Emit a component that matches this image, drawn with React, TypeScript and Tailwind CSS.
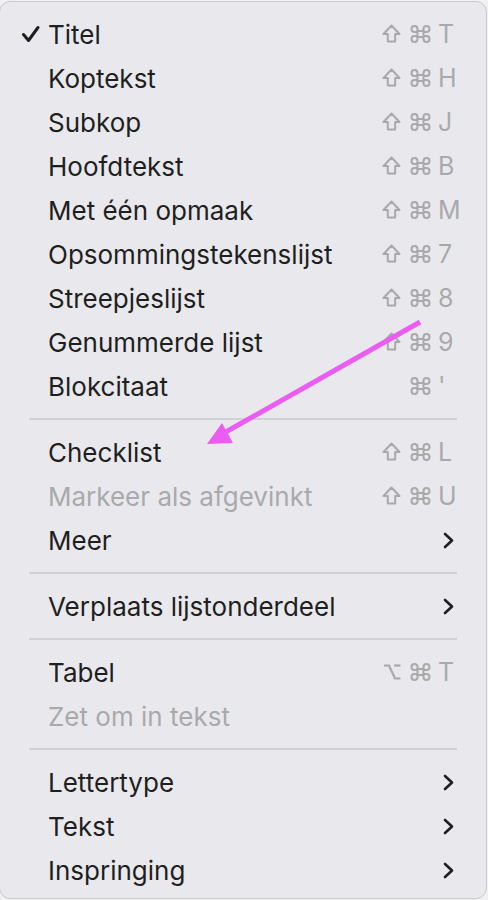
import React from 'react';

type Item =
  | { kind: 'sep' }
  | {
      kind: 'item';
      label: string;
      checked?: boolean;
      disabled?: boolean;
      mods?: string[];
      keyChar?: string;
      submenu?: boolean;
    };

const items: Item[] = [
  { kind: 'item', label: 'Titel', checked: true, mods: ['shift', 'cmd'], keyChar: 'T' },
  { kind: 'item', label: 'Koptekst', mods: ['shift', 'cmd'], keyChar: 'H' },
  { kind: 'item', label: 'Subkop', mods: ['shift', 'cmd'], keyChar: 'J' },
  { kind: 'item', label: 'Hoofdtekst', mods: ['shift', 'cmd'], keyChar: 'B' },
  { kind: 'item', label: 'Met één opmaak', mods: ['shift', 'cmd'], keyChar: 'M' },
  { kind: 'item', label: 'Opsommingstekenslijst', mods: ['shift', 'cmd'], keyChar: '7' },
  { kind: 'item', label: 'Streepjeslijst', mods: ['shift', 'cmd'], keyChar: '8' },
  { kind: 'item', label: 'Genummerde lijst', mods: ['shift', 'cmd'], keyChar: '9' },
  { kind: 'item', label: 'Blokcitaat', mods: ['cmd'], keyChar: "'" },
  { kind: 'sep' },
  { kind: 'item', label: 'Checklist', mods: ['shift', 'cmd'], keyChar: 'L' },
  { kind: 'item', label: 'Markeer als afgevinkt', disabled: true, mods: ['shift', 'cmd'], keyChar: 'U' },
  { kind: 'item', label: 'Meer', submenu: true },
  { kind: 'sep' },
  { kind: 'item', label: 'Verplaats lijstonderdeel', submenu: true },
  { kind: 'sep' },
  { kind: 'item', label: 'Tabel', mods: ['opt', 'cmd'], keyChar: 'T' },
  { kind: 'item', label: 'Zet om in tekst', disabled: true },
  { kind: 'sep' },
  { kind: 'item', label: 'Lettertype', submenu: true },
  { kind: 'item', label: 'Tekst', submenu: true },
  { kind: 'item', label: 'Inspringing', submenu: true },
];

const ShiftIcon = () => (
  <svg width="19" height="20" viewBox="0 0 19 20" fill="none" stroke="currentColor" strokeWidth="2" strokeLinejoin="round">
    <path d="M9.5 1.5 L17.5 10 H13.2 V17.5 H5.8 V10 H1.5 Z" />
  </svg>
);

const CmdIcon = () => (
  <svg width="21" height="20" viewBox="0 0 21 20" fill="none" stroke="currentColor" strokeWidth="2">
    <path d="M7.5 7 H13.5 V13 H7.5 Z" />
    <path d="M7.5 7 V5 A3 3 0 1 0 4.5 8 H7.5" />
    <path d="M13.5 7 V5 A3 3 0 1 1 16.5 8 H13.5" />
    <path d="M7.5 13 V15 A3 3 0 1 1 4.5 12 H7.5" />
    <path d="M13.5 13 V15 A3 3 0 1 0 16.5 12 H13.5" />
  </svg>
);

const OptIcon = () => (
  <svg width="18" height="20" viewBox="0 0 18 20" fill="none" stroke="currentColor" strokeWidth="2.2">
    <path d="M1 3.5 H6 L12 16.5 H17.5" />
    <path d="M11 3.5 H17.5" />
  </svg>
);

const CheckIcon = () => (
  <svg width="20" height="18" viewBox="0 0 20 18" fill="none" stroke="#1f1f1f" strokeWidth="3" strokeLinecap="round" strokeLinejoin="round">
    <path d="M2.5 9.5 L7.5 15.5 L17 2.5" />
  </svg>
);

const Chevron = () => (
  <svg width="13" height="17" viewBox="0 0 13 17" fill="none" stroke="#1f1f1f" strokeWidth="2.6" strokeLinecap="round" strokeLinejoin="round">
    <path d="M3 2 L10 8.5 L3 15" />
  </svg>
);

const modIcon = (m: string) => {
  if (m === 'shift') return <ShiftIcon key={m} />;
  if (m === 'opt') return <OptIcon key={m} />;
  return <CmdIcon key={m} />;
};

export default function App() {
  return (
    <div
      className="relative w-[488px] h-[900px] overflow-hidden bg-[#f1f1f3]"
      style={{ fontFamily: 'Inter, "Noto Sans", sans-serif' }}
    >
      <div className="absolute left-[-1px] top-[1px] w-[488px] h-[898px] rounded-[11px] border border-[#c9c9cd] bg-[#e9e9ed] pt-[10px]">
        {items.map((item, i) =>
          item.kind === 'sep' ? (
            <div key={i} className="h-[22px] flex items-center pl-[29px] pr-[29px]">
              <div className="h-[2px] w-full bg-[#d2d2d6]" />
            </div>
          ) : (
            <div key={i} className="h-[44px] flex items-center pl-[21px] pr-[31px]">
              <div className="w-[28px] flex items-center">{item.checked && <CheckIcon />}</div>
              <span
                className={`flex-1 text-[26px] -ml-[1px] ${
                  item.disabled ? 'text-[#a9a9ac]' : 'text-[#1f1f1f]'
                }`}
              >
                {item.label}
              </span>
              {item.keyChar && (
                <div className="flex items-center text-[#a9a9ac]">
                  <div className="flex items-center gap-[9px]">{item.mods?.map(modIcon)}</div>
                  <span className="w-[24px] pl-[7px] text-[25px] leading-none">{item.keyChar}</span>
                </div>
              )}
              {item.submenu && <Chevron />}
            </div>
          )
        )}
      </div>

      {/* annotation arrow */}
      <svg className="absolute left-0 top-0 pointer-events-none" width="488" height="900">
        <line x1="420" y1="322" x2="224" y2="433" stroke="#ea5cf2" strokeWidth="5" />
        <polygon points="207,444 222,423 233,443" fill="#ea5cf2" />
      </svg>
    </div>
  );
}
